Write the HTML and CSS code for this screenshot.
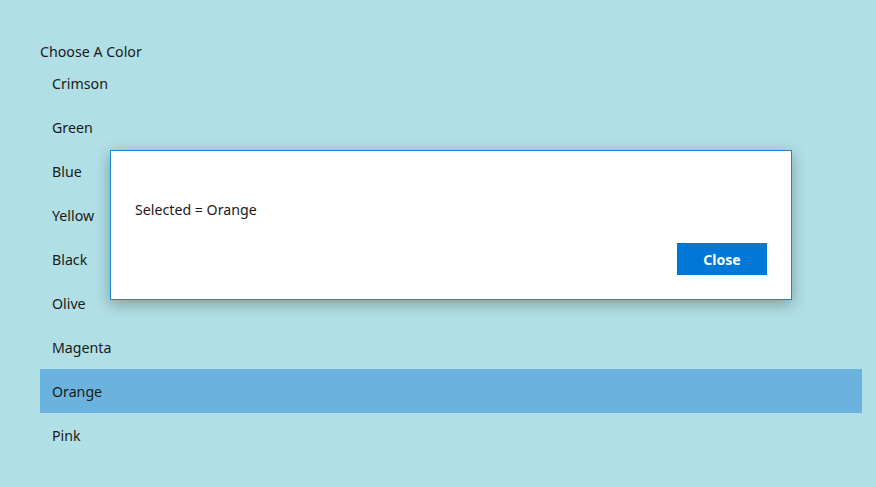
FILE: index.html
```html
<!DOCTYPE html>
<html lang="en">
<head>
  <meta charset="UTF-8" />
  <meta name="viewport" content="width=device-width, initial-scale=1.0" />
  <title>Choose A Color</title>
  <link rel="stylesheet" href="styles.css">
</head>
<body>
  <div class="page">
    <div class="header">Choose A Color</div>
    <ul class="color-list">
      <li>Crimson</li>
      <li>Green</li>
      <li>Blue</li>
      <li>Yellow</li>
      <li>Black</li>
      <li>Olive</li>
      <li>Magenta</li>
      <li class="selected">Orange</li>
      <li>Pink</li>
    </ul>
  </div>

  <div class="dialog">
    <div class="dialog-text">Selected = Orange</div>
    <div class="dialog-actions">
      <button class="close-btn">Close</button>
    </div>
  </div>
</body>
</html>
```

FILE: styles.css
```css
html, body {
  margin: 0;
  height: 100%;
}

body {
  background-color: #b0dfe5;
  color: #1a1a1a;
  font-family: 'Noto Sans', 'Open Sans', sans-serif;
  font-size: 14.2px;
  position: relative;
}

.page {
  padding: 41px 14px 0 40px;
}

.header {
  height: 20px;
  line-height: 20px;
  position: relative;
  top: 1px;
}

.color-list {
  list-style: none;
  margin: 0;
  padding: 0;
}

.color-list li {
  height: 44px;
  line-height: 46px;
  padding-left: 12px;
}

.color-list li.selected {
  background: #6ab3df;
}

.dialog {
  position: absolute;
  left: 110px;
  top: 150px;
  width: 680px;
  height: 148px;
  background: #fff;
  border: 1px solid #1a86d9;
  box-shadow: 0 4px 14px rgba(0, 0, 0, 0.3);
}

.dialog-text {
  padding: 49px 0 0 24px;
  height: 20px;
  line-height: 20px;
}

.dialog-actions {
  display: flex;
  justify-content: flex-end;
  padding: 23px 24px 0 0;
}

.close-btn {
  width: 90px;
  height: 32px;
  background: #0078d7;
  color: #fff;
  border: none;
  font-family: 'Noto Sans', 'Open Sans', sans-serif;
  font-size: 14px;
  font-weight: bold;
  padding: 0;
}
```
